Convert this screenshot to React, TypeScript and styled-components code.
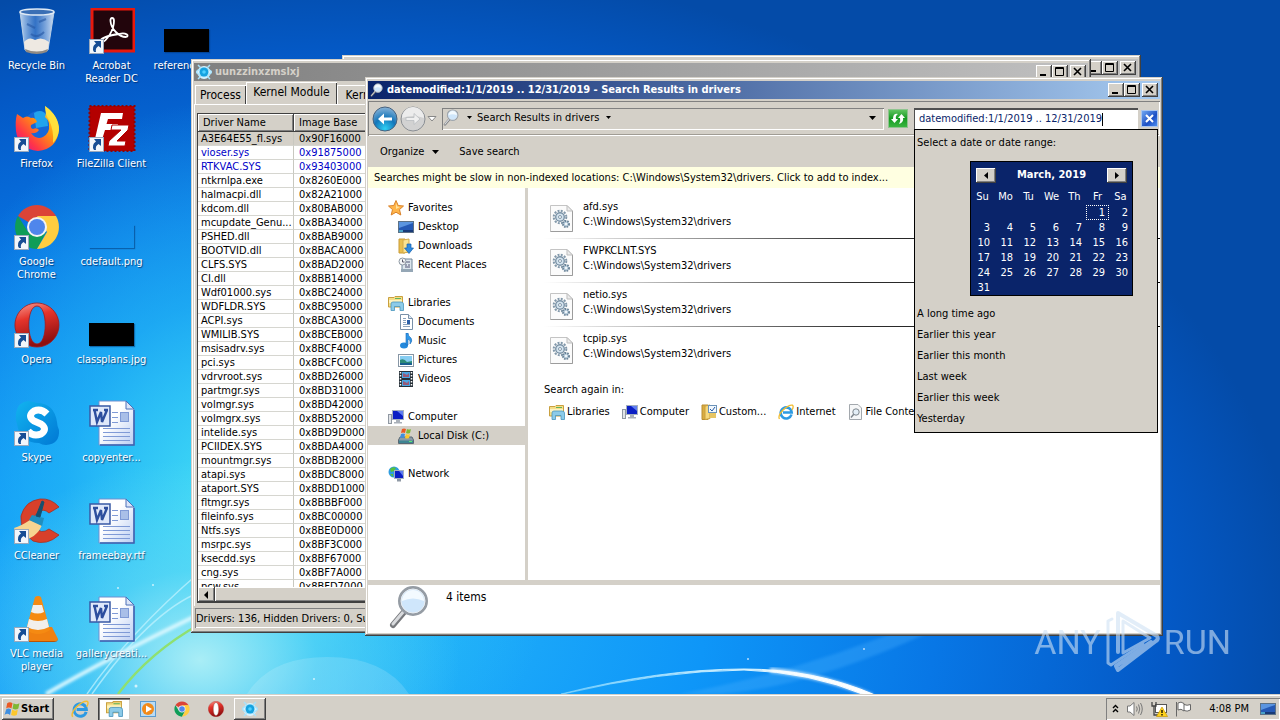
import React from "react";
import styled, { createGlobalStyle, css } from "styled-components";

const face = "#d4d0c8";

const raised = css`
  box-shadow: inset -1px -1px #404040, inset 1px 1px #ffffff, inset -2px -2px #808080;
`;
const sunken = css`
  box-shadow: inset 1px 1px #808080, inset -1px -1px #ffffff;
`;

const GlobalStyle = createGlobalStyle`
  * { box-sizing: border-box; }
  body { margin: 0; }
  body, button, input, table {
    font-family: Tahoma, "DejaVu Sans Condensed", "DejaVu Sans", sans-serif;
    font-size: 11px;
    line-height: 14px;
    color: #000;
  }
  button { border: 0; padding: 0; background: none; }
  svg { display: block; flex: none; }
  a { color: inherit; text-decoration: none; }
`;

const Screen = styled.div`
  min-height: 100vh;
  display: flex;
  flex-direction: column;
  overflow: hidden;
`;

const Desktop = styled.main`
  position: relative;
  flex: 1;
  overflow: hidden;
  background:
    radial-gradient(ellipse 260px 200px at 200px 660px, rgba(176, 240, 246, 0.95), rgba(110, 225, 245, 0.5) 45%, rgba(60, 200, 250, 0) 100%),
    radial-gradient(ellipse 330px 400px at 230px 500px, rgba(70, 225, 245, 0.95), rgba(40, 190, 245, 0.6) 50%, rgba(20, 160, 240, 0) 100%),
    radial-gradient(ellipse 960px 660px at 340px 620px, #27b8fa 0%, #0e96f8 38%, #0877e6 62%, #0459c6 86%, #044ba8 100%);
`;

const Wallpaper = styled.svg`
  position: absolute;
  left: 0;
  bottom: 0;
`;

/* ---------- desktop shortcuts ---------- */

const Shortcuts = styled.div`
  position: relative;
  display: grid;
  grid-auto-flow: column;
  grid-template-rows: repeat(7, 98px);
  grid-auto-columns: 75px;
  padding-top: 8px;
  width: max-content;
`;

const Shortcut = styled.button`
  display: flex;
  flex-direction: column;
  align-items: center;
  gap: 5px;
  width: 73px;
  color: #fff;
  line-height: 13px;
  text-shadow: 1px 1px 1px rgba(0, 30, 80, 0.7);
`;

const IconBox = styled.span`
  position: relative;
  width: 46px;
  height: 46px;
  flex: none;
  display: flex;
  align-items: flex-end;
  justify-content: center;
`;

const ArrowBadge = styled.span`
  position: absolute;
  left: 0;
  bottom: 0;
`;

const Thumb = styled.span<{ $empty?: boolean }>`
  width: 45px;
  height: 23px;
  margin-bottom: 2px;
  background: ${(p) => (p.$empty ? "transparent" : "#000")};
  box-shadow: 1px 1px 1px rgba(0, 50, 110, 0.5);
`;

const RecycleIcon = () => (
  <svg width="44" height="46" viewBox="0 0 44 46">
    <defs>
      <linearGradient id="bin" x1="0" x2="1">
        <stop offset="0" stopColor="#cfe2f5" stopOpacity=".9" />
        <stop offset=".45" stopColor="#5a8fd6" stopOpacity=".55" />
        <stop offset="1" stopColor="#e4eefa" stopOpacity=".9" />
      </linearGradient>
    </defs>
    <path d="M5 4 L10 42 Q22 47 33 42 L39 4Z" fill="url(#bin)" stroke="#b9cfe6" />
    <path d="M9 34 Q14 28 20 32 Q27 28 34 34 L33 42 Q22 47 10 42Z" fill="#eee9e2" />
    <path d="M10 41 Q22 46 33 41 L32 44 Q22 48 11 44Z" fill="#8f8a84" />
    <ellipse cx="22" cy="4" rx="17" ry="3" fill="#3a6fb5" stroke="#dfeaf5" strokeWidth="1.5" />
    <path d="M12 16 L20 20 M24 14 L31 11 M16 26 Q22 31 29 24" stroke="#2457a4" strokeWidth="2" fill="none" opacity=".6" />
  </svg>
);

const AcrobatIcon = () => (
  <svg width="46" height="46" viewBox="0 0 46 46">
    <rect x="3" y="1" width="42" height="42" fill="#22050c" stroke="#e8190c" strokeWidth="3" />
    <path d="M12 35 C18 33 25 22 25 13 C25 9 21 9 21.500 13 C22 21 30 29 37 29 C41 28 37 24 30 26 C22 27 13 29 11 33 C11 35 12 35 12 35Z" fill="none" stroke="#fff" strokeWidth="1.800" />
  </svg>
);

const FirefoxIcon = () => (
  <svg width="46" height="46" viewBox="0 0 46 46">
    <defs>
      <linearGradient id="fx" x1="1" x2="0.1" y1="0" y2=".9">
        <stop offset="0" stopColor="#fff44f" />
        <stop offset=".45" stopColor="#ff980e" />
        <stop offset=".8" stopColor="#ff3647" />
        <stop offset="1" stopColor="#e31587" />
      </linearGradient>
    </defs>
    <circle cx="25" cy="20" r="15" fill="#1667d8" />
    <path d="M20 7 Q28 2 33 10 L34 20 L22 22Z" fill="#22a4ee" />
    <path d="M3 8 L9 12 Q13 9 17 12 Q21 11 23 16 L17 19 Q16 22 19 23 Q23 21 25 24 Q22 28 17 27 Q22 34 29 31 Q36 27 35 19 Q35 14 31 11 Q33 7 31 0 Q45 10 45 24 Q43 43 24 45 Q4 43 2 25 Q1 15 3 8Z" fill="url(#fx)" />
    <path d="M31 0 Q45 10 45 24 Q44 32 39 37 Q40 24 35 14 Q31 8 31 0Z" fill="#ffe640" opacity=".85" />
  </svg>
);

const FileZillaIcon = () => (
  <svg width="48" height="47" viewBox="0 0 48 47">
    <rect x="1.500" y="1" width="45" height="45" fill="#b30000" stroke="#8d0505" strokeWidth="2" strokeDasharray="2 2" />
    <path d="M13 8 H35 L34 14 H20 L18.500 19 H30 L29 25 H17 L13 38 H6Z" fill="#fff" />
    <path d="M24 20 H41 L40 25 L29 36 H38 L37 41 H20 L21 36 L33 25 H23Z" fill="#fff" stroke="#b30000" strokeWidth="1" />
  </svg>
);

const ChromeIcon = ({ size = 46 }: { size?: number }) => (
  <svg width={size} height={size} viewBox="0 0 46 46">
    <path d="M23 23 L4 12 A22 22 0 0 1 42 12Z" fill="#db4437" />
    <path d="M4 12 A22 22 0 0 0 23 45 L32 28 L14 28Z" fill="#0f9d58" />
    <path d="M42 12 A22 22 0 0 1 23 45 L33 28 L30 12Z" fill="#ffcd40" />
    <path d="M23 12 H42 L33 28Z" fill="#ffcd40" />
    <circle cx="23" cy="23" r="10" fill="#f4f4f4" />
    <circle cx="23" cy="23" r="8" fill="#4f86ec" />
  </svg>
);

const OperaIcon = ({ size = 46 }: { size?: number }) => (
  <svg width={size} height={size} viewBox="0 0 46 46">
    <defs>
      <linearGradient id="op" x1="0" x2=".3" y1="0" y2="1">
        <stop offset="0" stopColor="#f7a095" />
        <stop offset=".4" stopColor="#e5342b" />
        <stop offset="1" stopColor="#8f0f10" />
      </linearGradient>
    </defs>
    <path fillRule="evenodd" d="M23 1 A22 22 0 1 1 22.900 1Z M23 4 C12 4 12 42 23 42 C34 42 34 4 23 4Z" fill="url(#op)" stroke="#a3181b" strokeWidth=".8" />
    {size < 30 && <ellipse cx="23" cy="23" rx="6" ry="17" fill="#fff" />}
  </svg>
);

const SkypeIcon = () => (
  <svg width="46" height="46" viewBox="0 0 46 46">
    <defs>
      <linearGradient id="sk" x1="0" x2="1" y2="1">
        <stop offset="0" stopColor="#12b4f0" />
        <stop offset="1" stopColor="#0078d4" />
      </linearGradient>
    </defs>
    <path d="M14 1 Q20 2 23 3 Q40 3 43 22 Q43 25 45 30 Q46 44 32 45 Q28 45 25 43 Q6 43 3 24 Q1 19 2 13 Q4 2 14 1Z" fill="url(#sk)" />
    <path d="M33 14 Q27 8 20 11 Q13 16 20 21 L27 24 Q34 29 27 34 Q19 37 14 31" fill="none" stroke="#fff" strokeWidth="7" />
  </svg>
);

const CCleanerIcon = () => (
  <svg width="48" height="46" viewBox="0 0 48 46">
    <path d="M46 9 Q38 0 27 1 Q12 3 8 18 Q7 34 20 43 Q34 48 46 37 L36 31 Q28 37 22 29 Q18 20 25 14 Q31 10 36 15Z" fill="#d8402a" stroke="#a92e20" strokeWidth=".8" />
    <path d="M17 22 L29 27 Q24 40 8 43 L1 30 Q8 28 17 22Z" fill="#f6d491" />
    <path d="M16 22 L19 17 L31 20 L29 28Z" fill="#1f8ebf" />
    <path d="M23 18 L29 3 L31 4 L27 19Z" fill="#17506e" stroke="#17506e" />
  </svg>
);

const VlcIcon = () => (
  <svg width="46" height="46" viewBox="0 0 46 46">
    <path d="M9 31 H38 L44 43 Q44 45 41 45 H8Z" fill="#f08010" />
    <path d="M21 1 Q24 -1 27 1 L36 34 Q24 42 12 34Z" fill="#f58a12" />
    <path d="M19 9 H28 L30 16 Q24 19 17 16Z M15 23 Q24 27 33 23 L35 31 Q24 37 13 31Z" fill="#f2efec" />
    <path d="M9 45 H41 Q44 45 44 43 L44 44 Q43 46 40 46 H9Z" fill="#b95405" />
  </svg>
);

const WordIcon = () => (
  <svg width="46" height="46" viewBox="0 0 46 46">
    <defs>
      <linearGradient id="wd" x1="0" x2="1" y1="0" y2="1">
        <stop offset=".4" stopColor="#fff" />
        <stop offset="1" stopColor="#b9cdf3" />
      </linearGradient>
    </defs>
    <path d="M10 1 H37 L45 9 V45 H10Z" fill="url(#wd)" stroke="#6f8fd0" />
    <path d="M45 10 V45 H11" fill="none" stroke="#3d62b0" strokeWidth="1.500" />
    <path d="M37 1 V9 H45Z" fill="#dbe5f8" stroke="#4e70b8" />
    <path d="M23 12.500 H29 M23 17.500 H29 M23 22.500 H29 M14 28.500 H41 M14 32.500 H41 M14 36.500 H41 M14 40.500 H41" stroke="#7f9ad6" />
    <rect x="31.500" y="12.500" width="8" height="9" fill="#a9bfe8" stroke="#7f9ad6" />
    <rect x="1" y="6" width="20" height="20" fill="#dfe8fa" stroke="#3859a5" strokeWidth="1.500" />
    <path d="M4 10 H9 M5.500 10 L8 22 L12 12 L13 22 L18 10 M15 10 H19" fill="none" stroke="#2d4e9e" strokeWidth="2.400" />
  </svg>
);

const ShortcutArrow = () => (
  <svg width="15" height="15" viewBox="0 0 15 15">
    <rect x=".5" y=".5" width="14" height="14" fill="#f2f6fb" stroke="#9aa9bd" />
    <path d="M5 2 H12 V9 L9.500 7 Q6 9 7 13 H5 Q2 8 7 4.500Z" fill="#174d94" />
  </svg>
);

type Short = { label: string; icon: React.ReactNode; arrow?: boolean };
const shortcuts: Short[] = [
  { label: "Recycle Bin", icon: <RecycleIcon /> },
  { label: "Firefox", icon: <FirefoxIcon />, arrow: true },
  { label: "Google Chrome", icon: <ChromeIcon />, arrow: true },
  { label: "Opera", icon: <OperaIcon />, arrow: true },
  { label: "Skype", icon: <SkypeIcon />, arrow: true },
  { label: "CCleaner", icon: <CCleanerIcon />, arrow: true },
  { label: "VLC media player", icon: <VlcIcon />, arrow: true },
  { label: "Acrobat Reader DC", icon: <AcrobatIcon />, arrow: true },
  { label: "FileZilla Client", icon: <FileZillaIcon />, arrow: true },
  { label: "cdefault.png", icon: <Thumb $empty /> },
  { label: "classplans.jpg", icon: <Thumb /> },
  { label: "copyenter...", icon: <WordIcon /> },
  { label: "frameebay.rtf", icon: <WordIcon /> },
  { label: "gallerycreati...", icon: <WordIcon /> },
  { label: "referencear...", icon: <Thumb /> },
];

/* ---------- windows ---------- */

const Win = styled.section<{ $left: number; $right: number; $top: number; $height: number }>`
  position: absolute;
  left: ${(p) => p.$left}px;
  right: ${(p) => p.$right}px;
  top: ${(p) => p.$top}px;
  height: ${(p) => p.$height}px;
  display: flex;
  flex-direction: column;
  padding: 4px 3px 3px;
  background: ${face};
  box-shadow: inset -1px -1px #404040, inset 1px 1px ${face}, inset -2px -2px #808080, inset 2px 2px #ffffff;
`;

const TitleBar = styled.header<{ $active?: boolean }>`
  flex: none;
  height: 18px;
  display: flex;
  align-items: center;
  gap: 3px;
  padding: 0 2px;
  font-weight: bold;
  color: ${(p) => (p.$active ? "#fff" : face)};
  background: ${(p) =>
    p.$active ? "linear-gradient(90deg, #0a246a, #a6caf0)" : "linear-gradient(90deg, #808080, #c0c0c0)"};
`;

const TitleText = styled.span`
  flex: 1;
  overflow: hidden;
  white-space: nowrap;
`;

const Captions = styled.div`
  display: flex;
  button:last-child { margin-left: 2px; }
`;

const CaptionButton = styled.button`
  width: 16px;
  height: 14px;
  display: grid;
  place-items: center;
  background: ${face};
  ${raised}
`;

const CaptionButtons = () => (
  <Captions>
    <CaptionButton aria-label="Minimize">
      <svg width="10" height="10"><rect x="1" y="7" width="6" height="2" /></svg>
    </CaptionButton>
    <CaptionButton aria-label="Maximize">
      <svg width="10" height="10"><path d="M.5 .5 H8.500 V8.500 H.5Z M0 1.500 H9" fill="none" stroke="#000" /></svg>
    </CaptionButton>
    <CaptionButton aria-label="Close">
      <svg width="10" height="10"><path d="M1 1 L8 8 M8 1 L1 8" stroke="#000" strokeWidth="1.600" /></svg>
    </CaptionButton>
  </Captions>
);

const EyeIcon = ({ size = 16 }: { size?: number }) => (
  <svg width={size} height={size} viewBox="0 0 16 16">
    <circle cx="8" cy="8.500" r="6.500" fill="#d9f3ff" />
    <path d="M0 8 Q8 0 16 8 Q8 17 0 8Z M2 1 L5 4 M14 1 L11 4 M2 15 L5 12 M14 15 L11 12" fill="#d9f3ff" stroke="#a8e2fb" strokeWidth="1.500" />
    <circle cx="8" cy="8" r="4.500" fill="#16a3e0" />
    <circle cx="8" cy="8" r="1.800" fill="#4fd0ff" />
  </svg>
);

const Tabs = styled.div`
  display: flex;
  align-items: flex-end;
  height: 23px;
  padding: 2px 0 0 1px;
`;

const Tab = styled.button<{ $active?: boolean }>`
  height: ${(p) => (p.$active ? 22 : 19)}px;
  width: ${(p) => (p.$active ? 91 : 51)}px;
  flex: none;
  overflow: hidden;
  white-space: nowrap;
  font-size: 12px;
  padding: 0 4px;
  padding-bottom: ${(p) => (p.$active ? 3 : 0)}px;
  background: ${face};
  box-shadow: inset 1px 1px #fff, inset -1px 0 #404040;
`;

const TabPanel = styled.div`
  flex: 1;
  min-height: 0;
  display: flex;
  flex-direction: column;
  padding: 8px 3px 3px 2px;
  border-top: 1px solid #fff;
  border-left: 1px solid #fff;
`;

const ListFrame = styled.div`
  flex: 1;
  min-height: 0;
  display: flex;
  flex-direction: column;
  background: #fff;
  border: 1px solid #404040;
  border-right-color: #fff;
`;

const ListClip = styled.div`
  flex: 1;
  min-height: 0;
  overflow: hidden;
`;

const DriverTable = styled.table`
  width: 100%;
  table-layout: fixed;
  border-collapse: separate;
  border-spacing: 0;
  th {
    height: 18px;
    padding: 0 5px;
    text-align: left;
    font-weight: normal;
    background: ${face};
    ${raised}
  }
  th:first-child { width: 96px; }
  td {
    height: 14px;
    padding: 0 3px;
    line-height: 13px;
    overflow: hidden;
    white-space: nowrap;
    border-bottom: 1px solid #d6d6d0;
    border-right: 1px solid #c8c8c0;
  }
  td + td { padding-left: 5px; }
`;

const DriverRow = styled.tr<{ $kind?: "selected" | "link" }>`
  color: ${(p) => (p.$kind === "link" ? "#0000c8" : "#000")};
  background: ${(p) => (p.$kind === "selected" ? face : "#fff")};
`;

const HScroll = styled.div`
  flex: none;
  display: flex;
  height: 15px;
  background: #eae8e4;
`;

const ScrollButton = styled.button`
  width: 17px;
  display: grid;
  place-items: center;
  background: ${face};
  ${raised}
`;

const ScrollThumb = styled.div`
  width: 60%;
  background: ${face};
  ${raised}
`;

const StatusBar = styled.footer`
  flex: none;
  height: 20px;
  margin: 2px 1px;
  padding: 4px 1px 0;
  ${sunken}
`;

const drivers: [string, string][] = [
  ["A3E64E55_fl.sys", "0x90F16000"], ["vioser.sys", "0x91875000"], ["RTKVAC.SYS", "0x93403000"],
  ["ntkrnlpa.exe", "0x8260E000"], ["halmacpi.dll", "0x82A21000"], ["kdcom.dll", "0x80BAB000"],
  ["mcupdate_Genu...", "0x8BA34000"], ["PSHED.dll", "0x8BAB9000"], ["BOOTVID.dll", "0x8BACA000"],
  ["CLFS.SYS", "0x8BAD2000"], ["CI.dll", "0x8BB14000"], ["Wdf01000.sys", "0x8BC24000"],
  ["WDFLDR.SYS", "0x8BC95000"], ["ACPI.sys", "0x8BCA3000"], ["WMILIB.SYS", "0x8BCEB000"],
  ["msisadrv.sys", "0x8BCF4000"], ["pci.sys", "0x8BCFC000"], ["vdrvroot.sys", "0x8BD26000"],
  ["partmgr.sys", "0x8BD31000"], ["volmgr.sys", "0x8BD42000"], ["volmgrx.sys", "0x8BD52000"],
  ["intelide.sys", "0x8BD9D000"], ["PCIIDEX.SYS", "0x8BDA4000"], ["mountmgr.sys", "0x8BDB2000"],
  ["atapi.sys", "0x8BDC8000"], ["ataport.SYS", "0x8BDD1000"], ["fltmgr.sys", "0x8BBBF000"],
  ["fileinfo.sys", "0x8BC00000"], ["Ntfs.sys", "0x8BE0D000"], ["msrpc.sys", "0x8BF3C000"],
  ["ksecdd.sys", "0x8BF67000"], ["cng.sys", "0x8BF7A000"], ["pcw.sys", "0x8BFD7000"],
];

const KernelWindow = () => (
  <Win $left={191} $right={189} $top={59} $height={574}>
    <TitleBar>
      <EyeIcon />
      <TitleText>uunzzinxzmslxj</TitleText>
      <CaptionButtons />
    </TitleBar>
    <Tabs role="tablist">
      <Tab role="tab">Process</Tab>
      <Tab role="tab" $active aria-selected>Kernel Module</Tab>
      <Tab role="tab">Kernel</Tab>
    </Tabs>
    <TabPanel>
      <ListFrame>
        <ListClip>
          <DriverTable>
            <thead>
              <tr><th>Driver Name</th><th>Image Base</th></tr>
            </thead>
            <tbody>
              {drivers.map(([name, base], i) => (
                <DriverRow key={name} $kind={i === 0 ? "selected" : i < 3 ? "link" : undefined}>
                  <td>{name}</td>
                  <td>{base}</td>
                </DriverRow>
              ))}
            </tbody>
          </DriverTable>
        </ListClip>
        <HScroll>
          <ScrollButton aria-label="Scroll left">
            <svg width="5" height="8"><path d="M4 0 V8 L0 4Z" /></svg>
          </ScrollButton>
          <ScrollThumb />
        </HScroll>
      </ListFrame>
    </TabPanel>
    <StatusBar>Drivers: 136, Hidden Drivers: 0, Suspicious: 0</StatusBar>
  </Win>
);

/* ---------- explorer icons ---------- */

const Lens = ({ size = 16 }: { size?: number }) => (
  <svg width={size} height={size} viewBox="0 0 44 44">
    <path d="M16 27 L5 40" stroke="#77797d" strokeWidth="6" strokeLinecap="round" />
    <path d="M16 26 L5 39" stroke="#d8dadd" strokeWidth="3" strokeLinecap="round" />
    <circle cx="25" cy="16" r="13.500" fill="#cfe6fb" stroke="#959ca4" strokeWidth="3" />
    <path d="M14 16 Q25 11 36 16 A11 11 0 0 0 14 16Z" fill="#f3faff" />
    <circle cx="25" cy="16" r="12" fill="none" stroke="#e8edf2" />
  </svg>
);

const StarIcon = () => (
  <svg width="16" height="16" viewBox="0 0 16 16">
    <path d="M8 .5 L10.200 5.500 L15.500 6 L11.500 9.600 L12.800 15 L8 12.200 L3.200 15 L4.500 9.600 L.5 6 L5.800 5.500Z" fill="#ffb54a" stroke="#d9822b" />
    <path d="M8 3 L9.200 6.500 L12 7 L8 9Z" fill="#ffe3a0" />
  </svg>
);
const ScreenIcon = () => (
  <svg width="16" height="16" viewBox="0 0 16 16">
    <rect x=".5" y="2.500" width="15" height="11" fill="#2559b5" stroke="#5c7186" />
    <path d="M1 9 L15 4 V3 H1Z" fill="#5b95e0" />
    <rect x="1" y="11" width="14" height="2" fill="#183a78" />
    <path d="M1 11 H5 V13 H1Z" fill="#49a0c8" />
  </svg>
);
const DownloadIcon = () => (
  <svg width="16" height="16" viewBox="0 0 16 16">
    <path d="M1 1 H7 V15 H1Z" fill="#e9bf50" stroke="#c99b36" />
    <path d="M5 2 L11 1 V14 L5 15Z" fill="#fbe391" stroke="#d3aa48" />
    <path d="M9 6 H13 V10 H15.500 L11 15.500 L6.500 10 H9Z" fill="#2f8be0" stroke="#1660ac" strokeWidth=".7" />
  </svg>
);
const RecentIcon = () => (
  <svg width="16" height="16" viewBox="0 0 16 16">
    <path d="M5 2 H14 V14 H4 V8" fill="#dbe5ec" stroke="#718699" />
    <path d="M3 12 H15 V15 H3Z" fill="#95a7b6" />
    <path d="M8 5 H12 M7 8 H9 M10 8 H12 M7 10 H12" stroke="#557" />
    <circle cx="4.500" cy="4.500" r="3.500" fill="#f4f6f8" stroke="#8d98a3" />
    <path d="M4.500 2.500 V5 H6.500" stroke="#556" fill="none" />
  </svg>
);
const FolderIcon = ({ size = 16 }: { size?: number }) => (
  <svg width={size} height={size} viewBox="0 0 16 16">
    <path d="M.5 2.500 H6 L7 1.500 H14.500 V12 H.5Z" fill="#f6de87" stroke="#c9a03f" />
    <path d="M1 5 H14 V8 H1Z" fill="#fdf3c0" />
    <path d="M7 3.500 H13" stroke="#62b35e" />
    <path d="M3 15.500 V9 Q3 7 5 7 H13 Q15.500 7 15.500 9 V15.500 H12 V11.500 H6.500 V15.500Z" fill="#8ccbe9" stroke="#4a95bd" strokeWidth=".8" />
  </svg>
);
const DocIcon = () => (
  <svg width="16" height="16" viewBox="0 0 16 16">
    <path d="M2.500 .5 H10.500 L14.500 4.500 V15.500 H2.500Z" fill="#fff" stroke="#7990a8" />
    <path d="M10.500 .5 V4.500 H14.500" fill="#dce8f4" stroke="#7990a8" />
    <path d="M5 4.500 H8 M5 6.500 H8 M5 8.500 H8 M5 10.500 H12 M5 12.500 H12" stroke="#8ba3bd" />
    <rect x="9" y="6" width="3" height="4" fill="#2b5fa8" />
  </svg>
);
const MusicIcon = () => (
  <svg width="16" height="16" viewBox="0 0 16 16">
    <ellipse cx="6" cy="12.500" rx="4" ry="3" fill="#2388dc" />
    <path d="M8 12 V0 H10 Q10 3 13 5 Q15 8 12 11 Q13 7 10 6 V12Z" fill="#2f98e8" stroke="#1767b5" strokeWidth=".6" />
  </svg>
);
const PictureIcon = () => (
  <svg width="16" height="16" viewBox="0 0 16 16">
    <rect x=".5" y="2.500" width="15" height="12" fill="#fff" stroke="#8796a5" />
    <rect x="2" y="4" width="12" height="9" fill="#86cdf2" />
    <path d="M2 8 Q6 6 9 10 L14 9 V13 H2Z" fill="#2c8b77" />
    <path d="M2 11 H14 V13 H2Z" fill="#195f8e" />
  </svg>
);
const VideoIcon = () => (
  <svg width="16" height="16" viewBox="0 0 16 16">
    <rect x="1" width="14" height="16" fill="#263038" />
    <path d="M2.500 1 V16 M13.500 1 V16" stroke="#fff" strokeWidth="1.500" strokeDasharray="1.500 1.500" />
    <rect x="4" y="1" width="8" height="6" fill="#4aa6e4" />
    <rect x="4" y="9" width="8" height="6" fill="#4aa6e4" />
    <path d="M5 2 L9 4 L11 2 V6 H5Z M5 10 L9 12 L11 10 V14 H5Z" fill="#b93a4a" opacity=".7" />
  </svg>
);
const ComputerIcon = () => (
  <svg width="16" height="16" viewBox="0 0 16 16">
    <rect x=".5" y="5.500" width="3" height="9" fill="#e1e4e8" stroke="#9098a2" />
    <rect x="4.500" y="1.500" width="11" height="9" fill="#0b1fc4" stroke="#a4b0c0" />
    <path d="M9 2 H15 V7Z" fill="#5f7df0" />
    <path d="M8 11 H12 V13 H14 V14.500 H6 V13 H8Z" fill="#a9b0b9" />
  </svg>
);
const FlagLogo = ({ size = 16 }: { size?: number }) => (
  <svg width={size} height={size} viewBox="0 0 16 16">
    <path d="M3 3 Q5.500 1 8 3 L7 8 Q4.500 6 2 8Z" fill="#ea5a24" />
    <path d="M9 3 Q11.500 5 14.500 3 L13.500 8 Q11 10 8 8Z" fill="#7fb835" />
    <path d="M2 9 Q4 7 6.700 9 L5.700 14 Q3 12 .5 14Z" fill="#3f8fe0" />
    <path d="M7.700 9 Q10.500 11 13 9 L12 14 Q9.500 15.500 6.700 14Z" fill="#fcc72c" />
  </svg>
);
const DiskIcon = () => (
  <svg width="16" height="16" viewBox="0 0 16 16">
    <path d="M2 9 L14 9 L15.500 12 V15.500 H.5 V12Z" fill="#8a9aa6" stroke="#586874" />
    <path d="M1 12.500 H15 V15 H1Z" fill="#3f8492" />
    <rect x="11" y="13" width="3" height="1" fill="#5dea70" />
    <path d="M4 1 Q6 0 8 1 L7 5 Q5 4 3 5Z" fill="#ea5a24" />
    <path d="M9 1 Q11 2 13 1 L12 5 Q10 6 8 5Z" fill="#7fb835" />
    <path d="M3 6 Q5 5 7 6 L6 10 Q4 9 2 10Z" fill="#3f8fe0" />
    <path d="M8 6 Q10 7 12 6 L11 10 Q9 11 7 10Z" fill="#fcc72c" />
  </svg>
);
const NetworkIcon = () => (
  <svg width="16" height="16" viewBox="0 0 16 16">
    <circle cx="6" cy="6" r="5.500" fill="#2f9de0" />
    <path d="M2 3 Q5 0 8 2 L6 5 L3 6Z M2 8 L5 8 L5 11Z" fill="#58c03c" />
    <rect x="6.500" y="4.500" width="9" height="8" fill="#0b1fc4" stroke="#a4b0c0" />
    <path d="M11 5 H15 V10Z" fill="#5f7df0" />
    <path d="M9 13 H13 V15.500 H9Z" fill="#8f99a5" />
  </svg>
);
const IeIcon = ({ size = 16 }: { size?: number }) => (
  <svg width={size} height={size} viewBox="0 0 16 16">
    <path d="M13.500 10.500 A5.500 5.500 0 1 1 13.700 8.500 H5" fill="none" stroke="#2d9ae3" strokeWidth="2.600" />
    <path d="M1.500 15 Q-.5 12 5 6 Q11 .5 14.500 1.200 Q16 2.500 14 6" fill="none" stroke="#f2bd30" strokeWidth="1.300" />
  </svg>
);
const CustomIcon = () => (
  <svg width="16" height="16" viewBox="0 0 16 16">
    <path d="M1 1 H7 V15.500 H1Z" fill="#d9ac42" stroke="#b98d30" />
    <path d="M4 2 L9 1 V14.500 L4 15.500Z" fill="#f6d87c" stroke="#c9a03f" />
    <rect x="7.500" y="1.500" width="8" height="7" fill="#f2f8fd" stroke="#6c93b8" />
    <path d="M9 5 L11 7 L14 3" fill="none" stroke="#2458a4" />
    <path d="M9 9 H15 V14 H9Z" fill="#e7c564" />
  </svg>
);
const FileSearchIcon = () => (
  <svg width="16" height="16" viewBox="0 0 16 16">
    <path d="M1.500 .5 H10 L13.500 4 V15.500 H1.500Z" fill="#f6f7f8" stroke="#a3a8ad" />
    <circle cx="8" cy="8" r="3.200" fill="#e4eef6" stroke="#7e868d" />
    <path d="M5.700 10.300 L3 13.500" stroke="#7e868d" strokeWidth="1.500" />
  </svg>
);
const SysFileIcon = () => (
  <svg width="26" height="30" viewBox="0 0 26 30">
    <path d="M1.500 2.500 H18 L23.500 8 V28.500 H1.500Z" fill="#fbfbfb" stroke="#c4c4c4" />
    <path d="M23.500 8 V28.500 H1.500" fill="none" stroke="#9c9c9c" />
    <path d="M18 2.500 V8 H23.500Z" fill="#ececec" stroke="#bdbdbd" />
    <circle cx="11" cy="14" r="6.300" fill="none" stroke="#8298aa" strokeWidth="2" strokeDasharray="2 1.300" />
    <circle cx="11" cy="14" r="4.300" fill="#d5e4ef" stroke="#7a92a6" strokeWidth="1.400" />
    <circle cx="11" cy="14" r="1.500" fill="#fff" stroke="#8298aa" />
    <circle cx="17" cy="21" r="3" fill="#c3d6e4" stroke="#6b8498" strokeWidth="2" strokeDasharray="1.500 1" />
    <circle cx="17" cy="21" r="1" fill="#fff" />
  </svg>
);
const Caret = () => <svg width="7" height="4"><path d="M0 0 H7 L3.500 4Z" /></svg>;
const SmallCaret = () => <svg width="5" height="3"><path d="M0 0 H5 L2.500 3Z" /></svg>;

/* ---------- explorer window ---------- */

const NavBar = styled.div`
  position: relative;
  z-index: 2;
  flex: none;
  height: 35px;
  margin-top: 2px;
  display: flex;
  align-items: center;
  padding: 0 2px 0 4px;
  box-shadow: inset 1px 1px #808080, inset -1px -1px #fff, inset 0 -2px #a09c94;
`;

const Address = styled.div`
  flex: 1;
  min-width: 0;
  height: 22px;
  margin-left: 5px;
  display: flex;
  align-items: center;
  gap: 7px;
  padding: 0 8px 2px 1px;
  white-space: nowrap;
  ${sunken}
`;

const Crumb = styled.button`
  display: flex;
  align-items: center;
  gap: 5px;
`;

const Spacer = styled.span`
  flex: 1;
`;

const Refresh = styled.button`
  width: 20px;
  height: 19px;
  display: grid;
  place-items: center;
  margin: 0 6px 0 4px;
  border: 1px solid #8fc48f;
  background: linear-gradient(#5fc45f, #169a22 50%, #39b53f);
`;

const SearchArea = styled.div`
  position: relative;
  width: 244px;
  display: flex;
  align-items: center;
  gap: 3px;
`;

const SearchBox = styled.div`
  flex: 1;
  height: 22px;
  display: flex;
  align-items: center;
  padding: 0 0 1px 4px;
  background: #fff;
  border-top: 2px solid #505050;
  border-left: 1px solid #505050;
`;

const SearchInput = styled.input`
  field-sizing: content;
  border: 0;
  padding: 0;
  outline: 0;
  background: none;
  color: #0a246a;
`;

const TextCursor = styled.span`
  width: 1px;
  height: 13px;
  background: #000;
`;

const ClearButton = styled.button`
  width: 17px;
  height: 17px;
  display: grid;
  place-items: center;
  border: 1px solid #a8c4ee;
  background: linear-gradient(135deg, #6fa6f2, #1c4fc4 60%, #4c8df0);
`;

const DatePopup = styled.div`
  position: absolute;
  top: 21px;
  left: 0;
  right: 0;
  height: 304px;
  padding: 6px 2px 0;
  display: flex;
  flex-direction: column;
  background: ${face};
  border: 1px solid #000;
`;

const Calendar = styled.div`
  flex: none;
  width: 163px;
  height: 135px;
  margin: 11px 0 8px 53px;
  background: #0a246a;
  border: 1px solid #000;
  color: #fff;
`;

const CalendarHead = styled.div`
  display: flex;
  align-items: center;
  justify-content: space-between;
  height: 27px;
  padding: 0 5px;
  font-weight: bold;
`;

const MonthButton = styled.button`
  width: 20px;
  height: 15px;
  display: grid;
  place-items: center;
  background: ${face};
  ${raised}
`;

const Days = styled.table`
  width: 100%;
  table-layout: fixed;
  border-collapse: separate;
  border-spacing: 0;
  color: #fff;
  th { padding: 0; height: 16px; font-weight: normal; text-align: center; }
  td { padding: 0 3px 0 0; height: 15px; line-height: 13px; text-align: right; border: 1px solid transparent; }
`;

const Day = styled.td<{ $today?: boolean }>`
  ${(p) => p.$today && "outline: 1px dotted #fff; outline-offset: -1px;"}
`;

const QuickRange = styled.button`
  flex: none;
  height: 21px;
  text-align: left;
`;

const Commands = styled.div`
  flex: none;
  height: 31px;
  display: flex;
  align-items: center;
  gap: 20px;
  padding: 0 12px;
`;

const Command = styled.button`
  display: flex;
  align-items: center;
  gap: 8px;
`;

const InfoBar = styled.button`
  flex: none;
  height: 21px;
  padding: 1px 6px 0;
  text-align: left;
  background: #ffffe1;
`;

const Body = styled.div`
  flex: 1;
  min-height: 0;
  display: flex;
`;

const Sidebar = styled.nav`
  width: 160px;
  flex: none;
  padding-top: 10px;
  display: flex;
  flex-direction: column;
  gap: 19px;
  background: #fff;
  border-right: 3px solid ${face};
`;

const NavItem = styled.a<{ $child?: boolean; $selected?: boolean }>`
  display: flex;
  align-items: center;
  gap: 4px;
  height: 19px;
  padding-left: ${(p) => (p.$child ? 30 : 20)}px;
  background: ${(p) => (p.$selected ? face : "transparent")};
`;

const Results = styled.div`
  flex: 1;
  padding: 7px 0 0 16px;
  background: #fff;
  overflow: hidden;
`;

const Result = styled.article`
  height: 44px;
  display: flex;
  gap: 8px;
  padding: 4px 0 0 5px;
  line-height: 15px;
  background: linear-gradient(90deg, #fff, #303030 50%, #000) left bottom / 100% 1px no-repeat;
  &:last-of-type { background: none; }
  svg { margin-top: 4px; }
`;

const AgainTitle = styled.div`
  margin-top: 12px;
`;

const AgainRow = styled.div`
  display: flex;
  gap: 12px;
  padding: 7px 0 0 5px;
`;

const AgainLink = styled.a`
  display: flex;
  align-items: center;
  gap: 2px;
  white-space: nowrap;
`;

const Details = styled.footer`
  flex: none;
  height: 53px;
  display: flex;
  gap: 14px;
  padding: 0 20px;
  background: #fff;
  border-top: 5px solid ${face};
  font-size: 12px;
  span { margin-top: 5px; }
`;

const groups = [
  [
    { t: "Favorites", i: <StarIcon /> },
    { t: "Desktop", i: <ScreenIcon />, c: true },
    { t: "Downloads", i: <DownloadIcon />, c: true },
    { t: "Recent Places", i: <RecentIcon />, c: true },
  ],
  [
    { t: "Libraries", i: <FolderIcon /> },
    { t: "Documents", i: <DocIcon />, c: true },
    { t: "Music", i: <MusicIcon />, c: true },
    { t: "Pictures", i: <PictureIcon />, c: true },
    { t: "Videos", i: <VideoIcon />, c: true },
  ],
  [
    { t: "Computer", i: <ComputerIcon /> },
    { t: "Local Disk (C:)", i: <DiskIcon />, c: true, s: true },
  ],
  [{ t: "Network", i: <NetworkIcon /> }],
] as { t: string; i: React.ReactNode; c?: boolean; s?: boolean }[][];

const weeks: (number | null)[][] = [
  [null, null, null, null, null, 1, 2],
  [3, 4, 5, 6, 7, 8, 9],
  [10, 11, 12, 13, 14, 15, 16],
  [17, 18, 19, 20, 21, 22, 23],
  [24, 25, 26, 27, 28, 29, 30],
  [31, null, null, null, null, null, null],
];

const ExplorerWindow = () => (
  <Win $left={365} $right={117} $top={77} $height={559}>
    <TitleBar $active>
      <Lens size={14} />
      <TitleText>datemodified:1/1/2019 .. 12/31/2019 - Search Results in drivers</TitleText>
      <CaptionButtons />
    </TitleBar>
    <NavBar>
      <button aria-label="Back">
        <svg width="27" height="26" viewBox="0 0 27 26">
          <defs>
            <radialGradient id="bk" cx=".5" cy=".9" r=".9">
              <stop offset="0" stopColor="#2fd0f4" />
              <stop offset=".5" stopColor="#1375b9" />
              <stop offset="1" stopColor="#8bb4d8" />
            </radialGradient>
          </defs>
          <circle cx="13" cy="13" r="12" fill="url(#bk)" stroke="#47627e" />
          <path d="M6 13 L12 7.500 V11.500 H20 V14.500 H12 V18.500Z" fill="#fff" />
        </svg>
      </button>
      <button aria-label="Forward">
        <svg width="27" height="26" viewBox="0 0 27 26">
          <circle cx="14" cy="13" r="12" fill="#d2d2d2" stroke="#8b8f94" />
          <path d="M3 12 A11 11 0 0 1 25 12 Q14 8 3 12Z" fill="#ececec" />
          <path d="M21 13 L15 7.500 V11.500 H7 V14.500 H15 V18.500Z" fill="#efefef" stroke="#b9bcc0" strokeWidth=".8" />
        </svg>
      </button>
      <button aria-label="Recent pages">
        <svg width="11" height="6"><path d="M2 .5 H10 L6 5Z" fill="#fff" stroke="#888" /></svg>
      </button>
      <Address>
        <Lens size={17} />
        <Crumb><SmallCaret />Search Results in drivers</Crumb>
        <SmallCaret />
        <Spacer />
        <button aria-label="Previous locations"><Caret /></button>
      </Address>
      <Refresh aria-label="Refresh">
        <svg width="16" height="13" viewBox="0 0 16 13">
          <path d="M1 7 L4.500 11 L8 7 H6 Q5 4 8 2 Q3 1 3 7Z" fill="#fff" />
          <path d="M8 6 L11.500 2 L15 6 H13 Q14 10 9 12 Q11 9 10 6Z" fill="#fff" />
        </svg>
      </Refresh>
      <SearchArea>
        <SearchBox>
          <SearchInput aria-label="Search" defaultValue="datemodified:1/1/2019 .. 12/31/2019" />
          <TextCursor />
        </SearchBox>
        <ClearButton aria-label="Clear search">
          <svg width="9" height="9"><path d="M1 1 L8 8 M8 1 L1 8" stroke="#fff" strokeWidth="2" /></svg>
        </ClearButton>
        <DatePopup>
          Select a date or date range:
          <Calendar>
            <CalendarHead>
              <MonthButton aria-label="Previous month">
                <svg width="4" height="7"><path d="M4 0 V7 L0 3.500Z" /></svg>
              </MonthButton>
              March, 2019
              <MonthButton aria-label="Next month">
                <svg width="4" height="7"><path d="M0 0 V7 L4 3.500Z" /></svg>
              </MonthButton>
            </CalendarHead>
            <Days>
              <thead>
                <tr>{["Su", "Mo", "Tu", "We", "Th", "Fr", "Sa"].map((d) => <th key={d}>{d}</th>)}</tr>
              </thead>
              <tbody>
                {weeks.map((w, i) => (
                  <tr key={i}>{w.map((d, j) => <Day key={j} $today={d === 1}>{d}</Day>)}</tr>
                ))}
              </tbody>
            </Days>
          </Calendar>
          {["A long time ago", "Earlier this year", "Earlier this month", "Last week", "Earlier this week", "Yesterday"].map((r) => (
            <QuickRange key={r}>{r}</QuickRange>
          ))}
        </DatePopup>
      </SearchArea>
    </NavBar>
    <Commands>
      <Command>Organize <Caret /></Command>
      <Command>Save search</Command>
    </Commands>
    <InfoBar>
      Searches might be slow in non-indexed locations: C:\Windows\System32\drivers. Click to add to index...
    </InfoBar>
    <Body>
      <Sidebar>
        {groups.map((g, i) => (
          <div key={i}>
            {g.map((n) => (
              <NavItem key={n.t} href="#" $child={n.c} $selected={n.s}>{n.i}{n.t}</NavItem>
            ))}
          </div>
        ))}
      </Sidebar>
      <Results>
        {["afd.sys", "FWPKCLNT.SYS", "netio.sys", "tcpip.sys"].map((f) => (
          <Result key={f}>
            <SysFileIcon />
            <div>
              <div>{f}</div>
              <div>C:\Windows\System32\drivers</div>
            </div>
          </Result>
        ))}
        <AgainTitle>Search again in:</AgainTitle>
        <AgainRow>
          <AgainLink href="#"><FolderIcon />Libraries</AgainLink>
          <AgainLink href="#"><ComputerIcon />Computer</AgainLink>
          <AgainLink href="#"><CustomIcon />Custom...</AgainLink>
          <AgainLink href="#"><IeIcon />Internet</AgainLink>
          <AgainLink href="#"><FileSearchIcon />File Contents</AgainLink>
        </AgainRow>
      </Results>
    </Body>
    <Details>
      <Lens size={44} />
      <span>4 items</span>
    </Details>
  </Win>
);

/* ---------- watermark and taskbar ---------- */

const Watermark = styled.div`
  position: absolute;
  right: 49px;
  bottom: 20px;
  display: flex;
  align-items: center;
  gap: 4px;
  font-family: "Roboto", sans-serif;
  font-size: 34px;
  line-height: 64px;
  color: #cfe2f5;
  opacity: 0.6;
`;

const Taskbar = styled.footer`
  flex: none;
  height: 28px;
  display: flex;
  align-items: center;
  gap: 2px;
  padding: 1px 0 0 2px;
  background: ${face};
  box-shadow: inset 0 1px ${face}, inset 0 2px #fff;
`;

const StartButton = styled.button`
  width: 52px;
  height: 22px;
  display: flex;
  align-items: center;
  padding-left: 2px;
  margin-right: 8px;
  font-weight: bold;
  background: ${face};
  ${raised}
`;

const TaskButton = styled.button<{ $state?: "pressed" | "open" }>`
  width: 32px;
  height: 22px;
  display: grid;
  place-items: center;
  ${(p) => p.$state === "open" && raised}
  ${(p) => p.$state === "pressed" && "background: #fff; box-shadow: inset 1px 1px #404040, inset 2px 2px #808080, inset -1px -1px #d4d0c8;"}
`;

const Tray = styled.div`
  margin-left: auto;
  height: 22px;
  width: 174px;
  display: flex;
  align-items: center;
  gap: 7px;
  padding: 0 4px 0 6px;
  ${sunken}
`;

const Clock = styled.span`
  flex: 1;
  text-align: right;
  padding-right: 4px;
  white-space: nowrap;
`;

export default function App() {
  return (
    <>
      <GlobalStyle />
      <Screen>
        <Desktop>
          <Wallpaper width="1280" height="292" viewBox="0 400 1280 292">
            <defs>
              <filter id="soft"><feGaussianBlur stdDeviation="1.5" /></filter>
              <linearGradient id="arc" x1="0" x2="1">
                <stop offset="0" stopColor="#8fdcff" stopOpacity=".6" />
                <stop offset=".6" stopColor="#d8f3ff" />
                <stop offset="1" stopColor="#fff" />
              </linearGradient>
            </defs>
            <path d="M247 692 Q270 655 327 655 Q385 655 409 692Z" fill="#fff" opacity=".15" />
            <path d="M46 692 Q110 655 200 612" stroke="#d9f8ff" strokeWidth="4" fill="none" filter="url(#soft)" />
            <path d="M87 692 Q130 630 200 570 M92 692 Q150 610 200 590" stroke="#c5f4ff" strokeWidth="1.500" fill="none" opacity=".7" />
            <path d="M118 692 Q150 650 200 622" stroke="#8fe070" strokeWidth="2.500" fill="none" />
            <path d="M680 692 Q800 670 920 620 L930 630 Q810 685 720 692Z" fill="#4fb4ff" opacity=".3" filter="url(#soft)" />
            <path d="M561 692 Q660 667 744 667 Q815 667 875 693 L865 693 Q810 670 744 668 Q660 669 563 692Z" fill="url(#arc)" stroke="url(#arc)" />
            <path d="M770 668 Q825 674 872 694" stroke="#fff" strokeWidth="5" fill="none" opacity=".75" filter="url(#soft)" />
            <g fill="#fff" opacity=".7">
              <circle cx="748" cy="657" r="1" /><circle cx="864" cy="647" r="1" /><circle cx="314" cy="677" r="1" />
              <circle cx="136" cy="684" r="1.500" /><circle cx="118" cy="586" r="1" /><circle cx="153" cy="583" r="1" />
            </g>
          </Wallpaper>
          <Shortcuts>
            {shortcuts.map((s) => (
              <Shortcut key={s.label}>
                <IconBox>
                  {s.icon}
                  {s.arrow && <ArrowBadge><ShortcutArrow /></ArrowBadge>}
                </IconBox>
                {s.label}
              </Shortcut>
            ))}
          </Shortcuts>
          <Win $left={342} $right={139} $top={55} $height={560}>
            <TitleBar><TitleText /><CaptionButtons /></TitleBar>
          </Win>
          <KernelWindow />
          <ExplorerWindow />
          <Watermark>
            <span>ANY</span>
            <svg width="55" height="64" viewBox="0 0 55 64" fill="none" stroke="#cfe2f5" strokeWidth="4" strokeLinejoin="round" strokeLinecap="round">
              <path d="M13 42 V3 L52 26 Q54 29 51 31 L13 60 L11 56 L46 32" />
              <path d="M18 12 V43 L45 28 L18 11" strokeWidth="3" />
              <path d="M7 9 L3 11 V53 L6 55 L38 34" strokeWidth="3" />
            </svg>
            <span>RUN</span>
          </Watermark>
        </Desktop>
        <Taskbar>
          <StartButton><FlagLogo size={17} />Start</StartButton>
          <TaskButton aria-label="Internet Explorer"><IeIcon size={18} /></TaskButton>
          <TaskButton aria-label="Windows Explorer" $state="pressed"><FolderIcon size={17} /></TaskButton>
          <TaskButton aria-label="Media Player">
            <svg width="16" height="16" viewBox="0 0 16 16">
              <rect x=".5" y=".5" width="15" height="15" fill="#b9dcf5" stroke="#5b9bd0" />
              <circle cx="8" cy="8" r="6" fill="#f28a1a" />
              <path d="M6 4.500 V11.500 L12 8Z" fill="#fff" />
            </svg>
          </TaskButton>
          <TaskButton aria-label="Chrome"><ChromeIcon size={16} /></TaskButton>
          <TaskButton aria-label="Opera"><OperaIcon size={16} /></TaskButton>
          <TaskButton aria-label="uunzzinxzmslxj" $state="open"><EyeIcon /></TaskButton>
          <Tray>
            <button aria-label="Show hidden icons">
              <svg width="7" height="9"><path d="M1 4 L3.500 1.500 L6 4 M1 8 L3.500 5.500 L6 8" fill="none" stroke="#000" strokeWidth="1.400" /></svg>
            </button>
            <svg width="18" height="16" viewBox="0 0 18 16" fill="none" stroke="#777">
              <path d="M1.500 5 H4 L8 1.500 V14.500 L4 11 H1.500Z" fill="#fff" />
              <path d="M10.500 5.500 Q12 8 10.500 10.500 M12.500 3.500 Q15 8 12.500 12.500 M14.500 2 Q18 8 14.500 14" />
            </svg>
            <svg width="17" height="16" viewBox="0 0 17 16">
              <rect x="4.500" y="3.500" width="11" height="8" fill="#fff" stroke="#555" />
              <path d="M1 1 V5 H5 V1 M3 5 V14 H8" fill="none" stroke="#444" strokeWidth="1.300" />
              <path d="M11 6 L16.500 15.500 H5.500Z" fill="#ffd21e" stroke="#c79a00" strokeWidth=".7" />
              <path d="M11 9 V12 M11 13 V14.500" stroke="#000" strokeWidth="1.300" />
            </svg>
            <svg width="17" height="16" viewBox="0 0 17 16">
              <path d="M1.500 1 V15.500 M3 2 Q6 0 9 2.500 V10 Q6 7 3 9Z M9 3.500 Q12 5 15.500 3.500 V9 Q12 11 9 9.500" fill="#fff" stroke="#666" />
            </svg>
            <Clock>4:08 PM</Clock>
            <button aria-label="Show desktop"><ScreenIcon /></button>
          </Tray>
        </Taskbar>
      </Screen>
    </>
  );
}
